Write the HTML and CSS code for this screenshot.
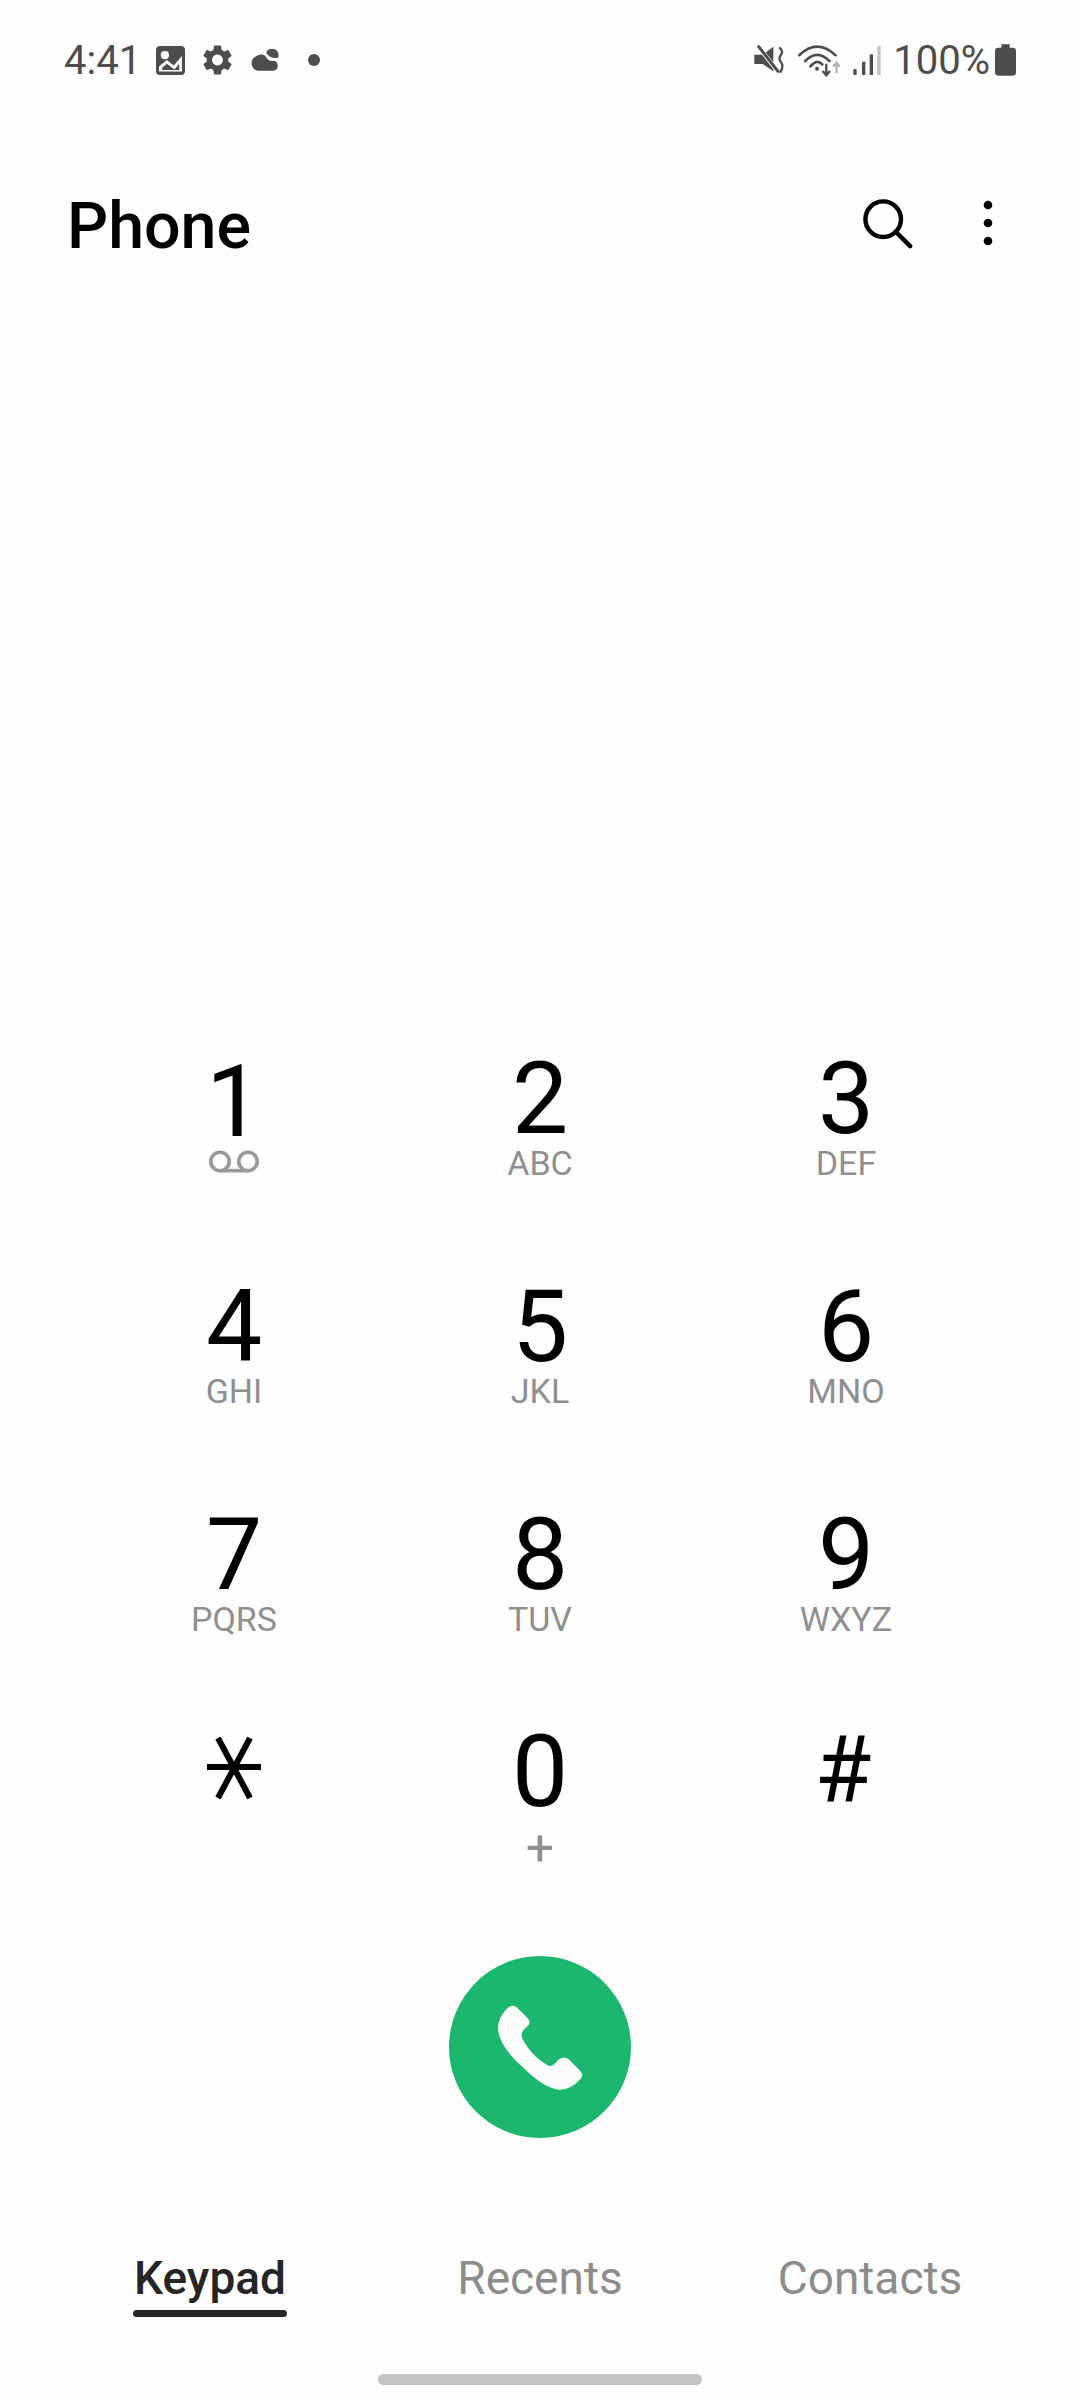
FILE: index.html
```html
<!DOCTYPE html>
<html lang="en">
<head>
    <meta charset="UTF-8">
    <title>Phone</title>
    <link rel="stylesheet" href="styles.css">
</head>
<body>
<div id="status">
    <div class="status-left">
        <span class="time">4:41</span>
        <svg class="ic-image" viewBox="322 33 85 85">
            <rect x="322" y="33" width="85" height="85" rx="12" fill="#4d4d4d"/>
            <circle cx="348" cy="60" r="12" fill="#fdfdfd"/>
            <path d="M331 108V92L354 74L374 90L398 62V108Z" fill="#fdfdfd"/>
            <path d="M340 103V97L354 85L376 102L390 85V103Z" fill="#4d4d4d"/>
        </svg>
        <svg class="ic-gear" viewBox="2.5 2 19 20"><path fill="#4d4d4d" d="M19.14 12.94c.04-.3.06-.61.06-.94 0-.32-.02-.64-.07-.94l2.03-1.58c.18-.14.23-.41.12-.61l-1.92-3.32c-.12-.22-.37-.29-.59-.22l-2.39.96c-.5-.38-1.03-.7-1.62-.94l-.36-2.54c-.04-.24-.24-.41-.48-.41h-3.84c-.24 0-.43.17-.47.41l-.36 2.54c-.59.24-1.13.57-1.62.94l-2.39-.96c-.22-.08-.47 0-.59.22L2.74 8.87c-.12.21-.08.47.12.61l2.03 1.58c-.05.3-.09.63-.09.94s.02.64.07.94l-2.03 1.58c-.18.14-.23.41-.12.61l1.92 3.32c.12.22.37.29.59.22l2.39-.96c.5.38 1.03.7 1.62.94l.36 2.54c.05.24.24.41.48.41h3.84c.24 0 .44-.17.47-.41l.36-2.54c.59-.24 1.13-.56 1.62-.94l2.39.96c.22.08.47 0 .59-.22l1.92-3.32c.12-.22.07-.47-.12-.61l-2.01-1.58zM12 15.6c-1.98 0-3.6-1.62-3.6-3.6s1.62-3.6 3.6-3.6 3.6 1.62 3.6 3.6-1.62 3.6-3.6 3.6z"/></svg>
        <svg class="ic-cloud" viewBox="602 42 90 65">
            <path d="M649 52A18 18 0 0 1 684 68Q660 72 649 52Z" fill="#4d4d4d"/>
            <path d="M624 106A22 22 0 0 1 616 66A24 24 0 0 1 646 62Q655 80 672 77A15 15 0 0 1 672 106Z" fill="#4d4d4d"/>
        </svg>
        <span class="dot"></span>
    </div>
    <div class="status-right">
        <svg class="ic-mute" viewBox="42 33 90 90">
            <path d="M43 62H68L100 38V112L68 90H43Z" fill="#4d4d4d"/>
            <path d="M52 34L118 118" stroke="#fdfdfd" stroke-width="13"/>
            <path d="M56 38L114 112" stroke="#4d4d4d" stroke-width="9" stroke-linecap="round"/>
            <path d="M118 40Q132 52 122 64Q114 74 124 86Q132 98 120 116" fill="none" stroke="#4d4d4d" stroke-width="7"/>
        </svg>
        <svg class="ic-wifi" viewBox="175 28 132 100">
            <g fill="none" stroke="#4d4d4d" stroke-width="8" stroke-linecap="round">
                <path d="M178 62Q232 10 288 62"/>
                <path d="M196 80Q232 42 270 80"/>
                <path d="M212 96Q232 72 248 90"/>
            </g>
            <circle cx="232" cy="103" r="6" fill="#4d4d4d"/>
            <path d="M260 88V122M249 110L260 123L271 110" fill="none" stroke="#4d4d4d" stroke-width="7"/>
            <path d="M291 116V86M281 96L291 84L301 96" fill="none" stroke="#b5b5b5" stroke-width="7"/>
        </svg>
        <svg class="ic-signal" viewBox="336 33 84 87">
            <rect x="337" y="102" width="10" height="18" rx="3" fill="#4d4d4d"/>
            <rect x="363" y="80" width="10" height="40" rx="2" fill="#4d4d4d"/>
            <rect x="386" y="58" width="10" height="62" rx="2" fill="#4d4d4d"/>
            <rect x="409" y="33" width="10" height="87" rx="2" fill="#c4c4c4"/>
        </svg>
        <span class="battery-text">100%</span>
        <svg class="ic-battery" viewBox="765 28 63 94">
            <path d="M784 28H809V38H818Q828 38 828 48V112Q828 122 818 122H775Q765 122 765 112V48Q765 38 775 38H784Z" fill="#4d4d4d"/>
        </svg>
    </div>
</div>

<div id="header">
    <h1>Phone</h1>
    <svg class="ic-search" viewBox="0 0 52 52">
        <circle cx="21" cy="21" r="18.5" fill="none" stroke="#000" stroke-width="4.6"/>
        <path d="M34 34L49 49" stroke="#000" stroke-width="4.6" stroke-linecap="round"/>
    </svg>
    <svg class="ic-more" viewBox="0 0 10 46">
        <circle cx="5" cy="5" r="4.3"/>
        <circle cx="5" cy="23" r="4.3"/>
        <circle cx="5" cy="41" r="4.3"/>
    </svg>
</div>

<div id="keypad">
    <div class="key key-one">
        <span class="num">1</span>
        <svg class="ic-voicemail" viewBox="0 0 50 24">
            <circle cx="11" cy="11.5" r="9.2" fill="none" stroke="#999" stroke-width="3.6"/>
            <circle cx="39" cy="11.5" r="9.2" fill="none" stroke="#999" stroke-width="3.6"/>
            <path d="M11 20.7H39" stroke="#999" stroke-width="3.6"/>
        </svg>
    </div>
    <div class="key"><span class="num">2</span><span class="sub">ABC</span></div>
    <div class="key"><span class="num">3</span><span class="sub">DEF</span></div>
    <div class="key"><span class="num">4</span><span class="sub">GHI</span></div>
    <div class="key"><span class="num">5</span><span class="sub">JKL</span></div>
    <div class="key"><span class="num">6</span><span class="sub">MNO</span></div>
    <div class="key"><span class="num">7</span><span class="sub">PQRS</span></div>
    <div class="key"><span class="num">8</span><span class="sub">TUV</span></div>
    <div class="key"><span class="num">9</span><span class="sub">WXYZ</span></div>
    <div class="key">
        <svg class="ic-star" viewBox="0 0 54 62">
            <path d="M0 30H54M11 1L43 61M43 1L11 61" fill="none" stroke="#000" stroke-width="6"/>
        </svg>
    </div>
    <div class="key"><span class="num">0</span><span class="sub plus">+</span></div>
    <div class="key"><span class="num hash">#</span></div>
</div>

<div id="call">
    <svg class="ic-call" viewBox="55 48 546 546">
        <circle cx="328" cy="321" r="273" fill="#1bb76e"/>
        <path fill="#fbfbfb" d="M232 203Q246 192 260 203L291 235Q302 247 291 258L278 271Q268 282 277 300Q305 350 348 374Q360 382 370 373L385 358Q400 347 414 358L447 391Q460 405 450 416Q420 450 385 449Q340 445 280 385Q205 320 202 265Q202 230 232 203Z"/>
    </svg>
</div>

<div id="tabs">
    <div class="tab active"><span>Keypad</span></div>
    <div class="tab"><span>Recents</span></div>
    <div class="tab"><span>Contacts</span></div>
</div>

<div id="homebar"></div>
</body>
</html>
```

FILE: styles.css
```css
*{
    margin: 0;
    padding: 0;
    box-sizing: border-box;
}
body{
    width: 1080px;
    height: 2400px;
    overflow: hidden;
    background-color: #fdfdfd;
    font-family: Roboto, "Liberation Sans", sans-serif;
}
svg{
    display: block;
    flex: none;
}

/* status bar */
#status{
    display: flex;
    justify-content: space-between;
    align-items: center;
    height: 48px;
    margin-top: 36px;
    padding: 0 64px;
    color: #4d4d4d;
    font-size: 40px;
}
.status-left,
.status-right{
    display: flex;
    align-items: center;
}
.status-left{
    gap: 18px;
}
.time{
    margin-right: -3px;
}
.ic-image{
    width: 29px;
    height: 29px;
}
.ic-gear{
    width: 29px;
    height: 30px;
}
.ic-cloud{
    width: 31px;
    height: 22px;
}
.dot{
    width: 12px;
    height: 12px;
    margin-left: 9px;
    border-radius: 50%;
    background-color: #4d4d4d;
}
.ic-mute{
    width: 30px;
    height: 30px;
    margin-right: 14px;
}
.ic-wifi{
    width: 44px;
    height: 33px;
    margin-right: 11px;
}
.ic-signal{
    width: 28px;
    height: 29px;
    margin-right: 12px;
}
.ic-battery{
    width: 21px;
    height: 32px;
    margin-left: 5px;
}

/* title row */
#header{
    display: flex;
    align-items: center;
    height: 76px;
    margin-top: 104px;
    padding-left: 67px;
}
#header h1{
    font-size: 64.5px;
    line-height: 76px;
    font-weight: 500;
    color: #000;
}
.ic-search{
    width: 50px;
    height: 50px;
    margin-left: auto;
    margin-bottom: 4px;
}
.ic-more{
    width: 10px;
    height: 46px;
    margin: 0 87px 6px 70px;
}

/* keypad */
#keypad{
    display: grid;
    grid-template-columns: repeat(3, 306px);
    grid-template-rows: 228px 228px 217px 229px;
    margin-top: 790px;
    padding-left: 81px;
}
.key{
    display: flex;
    flex-direction: column;
    align-items: center;
}
.num{
    font-size: 100px;
    line-height: 90px;
    color: #000;
}
.sub{
    margin-top: -1px;
    font-size: 34px;
    line-height: 40px;
    color: #8f8f8f;
}
.key-one .num{
    margin-top: 3px;
}
.ic-voicemail{
    width: 50px;
    height: 24px;
    margin-top: 3px;
}
.ic-star{
    width: 54px;
    height: 62px;
    margin-top: 10px;
}
.plus{
    font-size: 50px;
    line-height: 50px;
    margin-top: 6px;
}
.num.hash{
    font-size: 92px;
    margin: -1px 6px 0 0;
}

/* call button */
#call{
    display: flex;
    justify-content: center;
}
.ic-call{
    width: 182px;
    height: 182px;
}

/* bottom tabs */
#tabs{
    display: grid;
    grid-template-columns: repeat(3, 330px);
    margin-top: 114px;
    padding-left: 45px;
}
.tab{
    text-align: center;
    font-size: 46px;
    line-height: 52px;
    color: #8c8c8c;
}
.tab span{
    display: inline-block;
}
.tab.active{
    color: #252525;
    font-weight: 500;
}
.tab.active span::after{
    content: "";
    display: block;
    height: 7px;
    margin: 6px -1px 0;
    border-radius: 4px;
    background-color: #252525;
}

#homebar{
    width: 324px;
    height: 11px;
    margin: 57px auto 0;
    border-radius: 6px;
    background-color: #c4c4c4;
}
```
